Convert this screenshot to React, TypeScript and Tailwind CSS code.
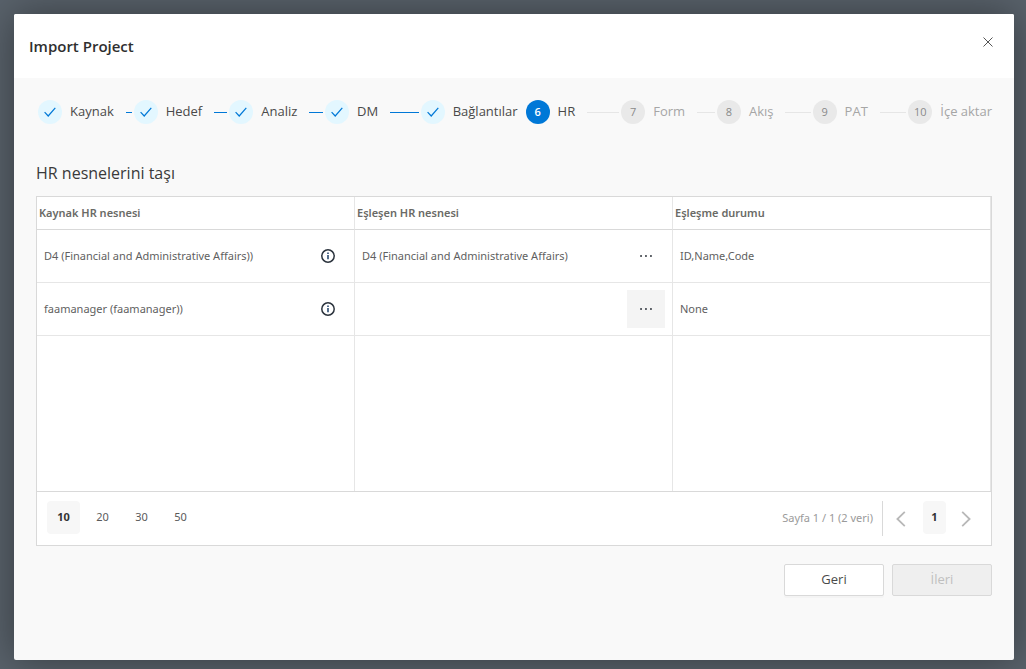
type StepState = "done" | "active" | "todo";

interface Step {
  label: string;
  state: StepState;
  connector: boolean;
}

const steps: Step[] = [
  { label: "Kaynak", state: "done", connector: true },
  { label: "Hedef", state: "done", connector: true },
  { label: "Analiz", state: "done", connector: true },
  { label: "DM", state: "done", connector: true },
  { label: "Bağlantılar", state: "done", connector: false },
  { label: "HR", state: "active", connector: true },
  { label: "Form", state: "todo", connector: true },
  { label: "Akış", state: "todo", connector: true },
  { label: "PAT", state: "todo", connector: true },
  { label: "İçe aktar", state: "todo", connector: false },
];

const rows = [
  {
    source: "D4 (Financial and Administrative Affairs))",
    match: "D4 (Financial and Administrative Affairs)",
    status: "ID,Name,Code",
    highlighted: false,
  },
  { source: "faamanager (faamanager))", match: "", status: "None", highlighted: true },
];

const circleStyles: Record<StepState, string> = {
  done: "bg-[#e3f7ff] text-[#0078d7]",
  active: "bg-[#0078d7] text-white font-semibold",
  todo: "bg-[#e9e9e9] text-[#8a8a8a]",
};

function CheckIcon() {
  return (
    <svg width="12" height="10" viewBox="0 0 12 10" fill="none" stroke="currentColor" strokeWidth="1.2" aria-hidden="true">
      <path d="M0.6 5.2 4.2 9 11.3 0.8" />
    </svg>
  );
}

function InfoIcon() {
  return (
    <svg width="14" height="14" viewBox="0 0 14 14" fill="none" aria-hidden="true">
      <circle cx="7" cy="7" r="6.2" stroke="#2b333d" strokeWidth="1.5" />
      <path d="M7 6v4.2" stroke="#2a4a70" strokeWidth="1.6" />
      <path d="M7 3.5v1.5" stroke="#2a4a70" strokeWidth="1.6" />
    </svg>
  );
}

function DotsIcon() {
  return (
    <svg width="12" height="2" viewBox="0 0 12 2" fill="#3a3f46" aria-hidden="true">
      <rect x="0.2" y="0.1" width="1.7" height="1.8" />
      <rect x="5.1" y="0.1" width="1.7" height="1.8" />
      <rect x="10.1" y="0.1" width="1.7" height="1.8" />
    </svg>
  );
}

function Chevron({ d }: { d: string }) {
  return (
    <svg width="10" height="16" viewBox="0 0 10 16" fill="none" stroke="#b8b8b8" strokeWidth="1.8" aria-hidden="true">
      <path d={d} />
    </svg>
  );
}

function Stepper() {
  return (
    <ol className="flex items-center pl-0.5">
      {steps.map((step, i) => {
        const last = i === steps.length - 1;
        return (
          <li
            key={step.label}
            aria-current={step.state === "active" ? "step" : undefined}
            className={last ? "flex items-center" : "flex flex-1 items-center"}
          >
            <span
              className={`mr-2 flex size-6 shrink-0 items-center justify-center rounded-full text-[11px] ${circleStyles[step.state]}`}
            >
              {step.state === "done" ? <CheckIcon /> : i + 1}
            </span>
            <span
              className={`whitespace-nowrap text-[13px] ${last ? "" : "mr-2"} ${
                step.state === "todo" ? "text-[#a6a6a6]" : "text-[#4a4a4a]"
              }`}
            >
              {step.label}
            </span>
            {step.connector && (
              <span
                className={`ml-1 mr-0.5 h-px flex-1 ${step.state === "done" ? "bg-[#0078d7]" : "bg-[#e6e6e6]"}`}
              />
            )}
          </li>
        );
      })}
    </ol>
  );
}

function ObjectTable() {
  const cell = "border-r border-b border-r-[#e6e6e6] border-b-[#e6e6e6] px-[7px]";
  return (
    <table className="w-full table-fixed border-separate border-spacing-0 text-left text-[11px] text-[#5f5f5f]">
      <thead>
        <tr className="h-[33px] text-[#6a6a66]">
          {["Kaynak HR nesnesi", "Eşleşen HR nesnesi", "Eşleşme durumu"].map((title) => (
            <th
              key={title}
              className="border-r border-b border-r-[#e6e6e6] border-b-[#d9d9d9] px-0.5 font-semibold"
            >
              {title}
            </th>
          ))}
        </tr>
      </thead>
      <tbody>
        {rows.map((row) => (
          <tr key={row.source} className="h-[53px]">
            <td className={cell}>
              <div className="flex items-center justify-between">
                <span>{row.source}</span>
                <button type="button" aria-label="Bilgi" className="flex size-[38px] items-center justify-center">
                  <InfoIcon />
                </button>
              </div>
            </td>
            <td className={cell}>
              <div className="flex items-center justify-between">
                <span>{row.match}</span>
                <button
                  type="button"
                  aria-label="Seç"
                  className={`flex size-[38px] items-center justify-center ${row.highlighted ? "bg-[#f4f4f4]" : ""}`}
                >
                  <DotsIcon />
                </button>
              </div>
            </td>
            <td className={cell}>{row.status}</td>
          </tr>
        ))}
        <tr className="h-[155px]">
          {[0, 1, 2].map((n) => (
            <td key={n} className="border-r border-[#e6e6e6]" />
          ))}
        </tr>
      </tbody>
    </table>
  );
}

function Pager() {
  return (
    <div className="flex items-start justify-between border-t border-[#d9d9d9] px-[10px] py-[9px] text-[11px] text-[#5a5a5a]">
      <div className="flex gap-[6px]">
        {[10, 20, 30, 50].map((size) => (
          <button
            key={size}
            type="button"
            className={`size-[33px] rounded ${size === 10 ? "bg-[#f7f7f7] font-bold text-[#333333]" : ""}`}
          >
            {size}
          </button>
        ))}
      </div>
      <div className="flex items-start">
        <span className="pr-[9px] leading-[33px] text-[#9a9a9a]">Sayfa 1 / 1 (2 veri)</span>
        <span className="h-[35px] w-px bg-[#d9d9d9]" />
        <button type="button" aria-label="Önceki sayfa" className="flex h-[35px] w-9 items-center justify-center">
          <Chevron d="M8.8 0.8 1.4 8l7.4 7.2" />
        </button>
        <button type="button" className="mx-1 h-[33px] w-[23px] rounded bg-[#f7f7f7] font-bold text-[#333333]">
          1
        </button>
        <button type="button" aria-label="Sonraki sayfa" className="flex h-[35px] w-[31px] items-center justify-center">
          <Chevron d="M1.2 0.8 8.6 8l-7.4 7.2" />
        </button>
      </div>
    </div>
  );
}

export default function App() {
  return (
    <div className="flex min-h-screen flex-col bg-[#59626b] pt-[14px] pr-3 pb-[9px] pl-[14px] font-['Open_Sans','Noto_Sans',sans-serif]">
      <section
        role="dialog"
        aria-labelledby="dialog-title"
        className="flex flex-1 flex-col rounded-[2px] bg-[#f9f9f9] shadow-[0_0_40px_rgba(0,0,0,0.4)]"
      >
        <header className="flex h-16 items-center justify-between rounded-t-[2px] bg-white pr-[14px] pl-[15px]">
          <h1 id="dialog-title" className="text-[15px] font-semibold text-[#2f2f2f]">
            Import Project
          </h1>
          <button type="button" aria-label="Kapat" className="mb-2 flex size-6 items-center justify-center">
            <svg width="10" height="10" viewBox="0 0 10 10" fill="none" stroke="#555555" strokeWidth="1" aria-hidden="true">
              <path d="M0.5 0.5l9 9M9.5 0.5l-9 9" />
            </svg>
          </button>
        </header>
        <main className="px-[22px] pt-[22px]">
          <Stepper />
          <h2 className="mt-[37px] mb-[11px] text-base text-[#3a3a3a]">HR nesnelerini taşı</h2>
          <div className="border border-[#d9d9d9] bg-white font-['Noto_Sans',sans-serif]">
            <ObjectTable />
            <Pager />
          </div>
          <div className="mt-[18px] flex justify-end gap-2 text-[13px]">
            <button
              type="button"
              className="h-8 w-[100px] rounded-[2px] border border-[#d9d9d9] bg-white text-[#4a4a4a] shadow-[0_2px_0_rgba(0,0,0,0.02)]"
            >
              Geri
            </button>
            <button
              type="button"
              disabled
              className="h-8 w-[100px] rounded-[2px] border border-[#d9d9d9] bg-[#efefef] text-[#bfbfbf]"
            >
              İleri
            </button>
          </div>
        </main>
      </section>
    </div>
  );
}
